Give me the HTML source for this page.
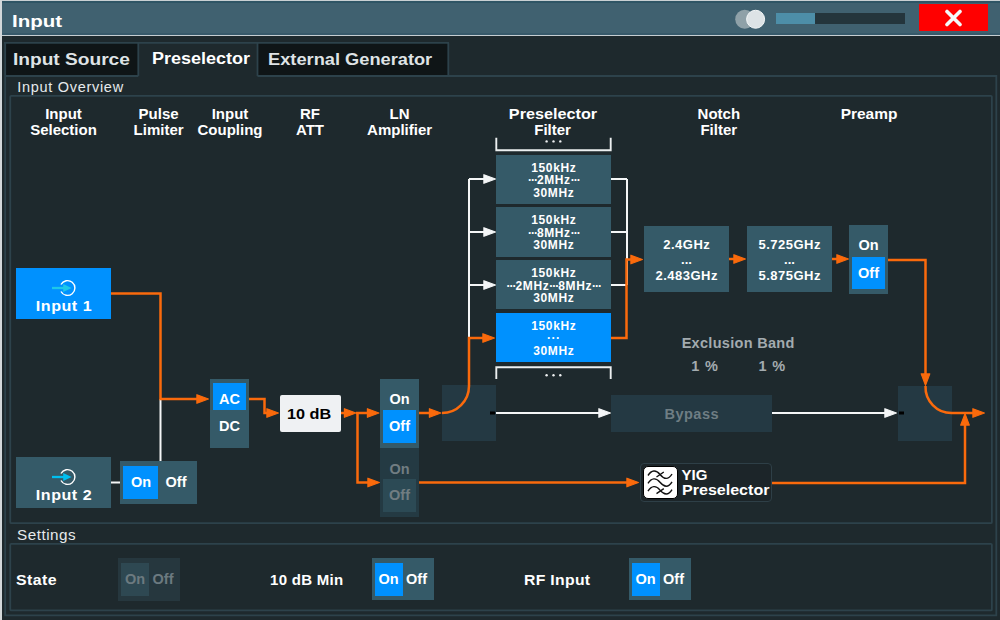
<!DOCTYPE html>
<html><head><meta charset="utf-8"><style>
html,body{margin:0;padding:0;}
body{width:1000px;height:620px;position:relative;overflow:hidden;background:#1e292d;font-family:'Liberation Sans', sans-serif;}
</style></head><body>
<div style="position:absolute;left:0px;top:0px;width:1000px;height:1px;background:#c9d0d3;"></div>
<div style="position:absolute;left:0px;top:1px;width:1000px;height:34px;background:#406170;"></div>
<div style="position:absolute;left:0px;top:1px;width:1000px;height:2px;background:#2f5565;"></div>
<div style="position:absolute;left:0px;top:33px;width:1000px;height:2px;background:#37596a;"></div>
<div style="position:absolute;left:0px;top:35px;width:1000px;height:1px;background:#c5cdd1;"></div>
<div style="position:absolute;left:12px;top:13.00px;height:0;line-height:0;font:bold 16px 'Liberation Sans', sans-serif;letter-spacing:0px;color:#fff;white-space:nowrap;transform:scaleX(1.28);transform-origin:0 0;">Input</div>
<svg style="position:absolute;left:0;top:0" width="1000" height="620"><circle cx="744.75" cy="19.25" r="9.5" fill="#8fa1a8"/><circle cx="755.6" cy="19.25" r="9" fill="#dde3e6" stroke="#f4f7f8" stroke-width="1"/></svg>
<div style="position:absolute;left:776px;top:13px;width:129px;height:11px;background:#24353c;"></div>
<div style="position:absolute;left:776px;top:13px;width:38.5px;height:11px;background:#4d8ea8;"></div>
<div style="position:absolute;left:919px;top:3.5px;width:69px;height:27.0px;background:#ff0000;"></div>
<svg style="position:absolute;left:944px;top:9px" width="19" height="19"><path d="M3 2.5L16 15.5M16 2.5L3 15.5" stroke="#f4f8f8" stroke-width="3.6" stroke-linecap="round"/></svg>
<div style="position:absolute;left:0px;top:0px;width:2px;height:620px;background:#d3d8da;"></div>
<div style="position:absolute;left:5px;top:43px;width:133px;height:32px;background:#0f1517;"></div>
<div style="position:absolute;left:258px;top:43px;width:190px;height:32px;background:#0f1517;"></div>
<svg style="position:absolute;left:0;top:0" width="1000" height="620" fill="none" stroke="#2d424b" stroke-width="1.8"><path d="M4 42.9 H449 M5.2 43 V76 M138.3 43 V76 M257.5 43 V76 M448.3 43 V76"/><path d="M5.2 76 V615.3 H996.3 V76 H257.5 M5.2 76 H138.3"/><rect x="10.25" y="95.8" width="981.6" height="427.4" rx="1"/><rect x="10.25" y="543.8" width="981.6" height="66.6" rx="1"/></svg>
<div style="position:absolute;left:13px;top:51.00px;height:0;line-height:0;font:bold 16px 'Liberation Sans', sans-serif;letter-spacing:0px;color:#dfe3e5;white-space:nowrap;transform:scaleX(1.195);transform-origin:0 0;">Input Source</div>
<div style="position:absolute;left:152.4px;top:50.00px;height:0;line-height:0;font:bold 16px 'Liberation Sans', sans-serif;letter-spacing:0px;color:#fff;white-space:nowrap;transform:scaleX(1.124);transform-origin:0 0;">Preselector</div>
<div style="position:absolute;left:268px;top:51.00px;height:0;line-height:0;font:bold 16px 'Liberation Sans', sans-serif;letter-spacing:0px;color:#dfe3e5;white-space:nowrap;transform:scaleX(1.14);transform-origin:0 0;">External Generator</div>
<div style="position:absolute;left:17.3px;top:79.00px;height:0;line-height:0;font:normal 14.5px 'Liberation Sans', sans-serif;letter-spacing:0.7px;color:#e6eaec;white-space:nowrap;">Input Overview</div>
<div style="position:absolute;left:16.5px;top:527.00px;height:0;line-height:0;font:normal 14.5px 'Liberation Sans', sans-serif;letter-spacing:0.5px;color:#e6eaec;white-space:nowrap;transform:scaleX(1.05);transform-origin:0 0;">Settings</div>
<div style="position:absolute;left:-136.50px;top:105.00px;width:400px;height:0;line-height:0;text-align:center;font:bold 15px 'Liberation Sans', sans-serif;letter-spacing:0px;color:#fff;white-space:nowrap;">Input</div>
<div style="position:absolute;left:-136.50px;top:121.00px;width:400px;height:0;line-height:0;text-align:center;font:bold 15px 'Liberation Sans', sans-serif;letter-spacing:0px;color:#fff;white-space:nowrap;">Selection</div>
<div style="position:absolute;left:-41.40px;top:105.00px;width:400px;height:0;line-height:0;text-align:center;font:bold 15px 'Liberation Sans', sans-serif;letter-spacing:0px;color:#fff;white-space:nowrap;">Pulse</div>
<div style="position:absolute;left:-41.40px;top:121.00px;width:400px;height:0;line-height:0;text-align:center;font:bold 15px 'Liberation Sans', sans-serif;letter-spacing:0px;color:#fff;white-space:nowrap;">Limiter</div>
<div style="position:absolute;left:30.00px;top:105.00px;width:400px;height:0;line-height:0;text-align:center;font:bold 15px 'Liberation Sans', sans-serif;letter-spacing:0px;color:#fff;white-space:nowrap;">Input</div>
<div style="position:absolute;left:30.00px;top:121.00px;width:400px;height:0;line-height:0;text-align:center;font:bold 15px 'Liberation Sans', sans-serif;letter-spacing:0px;color:#fff;white-space:nowrap;">Coupling</div>
<div style="position:absolute;left:110.00px;top:105.00px;width:400px;height:0;line-height:0;text-align:center;font:bold 15px 'Liberation Sans', sans-serif;letter-spacing:0px;color:#fff;white-space:nowrap;">RF</div>
<div style="position:absolute;left:110.00px;top:121.00px;width:400px;height:0;line-height:0;text-align:center;font:bold 15px 'Liberation Sans', sans-serif;letter-spacing:0px;color:#fff;white-space:nowrap;">ATT</div>
<div style="position:absolute;left:199.60px;top:105.00px;width:400px;height:0;line-height:0;text-align:center;font:bold 15px 'Liberation Sans', sans-serif;letter-spacing:0px;color:#fff;white-space:nowrap;">LN</div>
<div style="position:absolute;left:199.60px;top:121.00px;width:400px;height:0;line-height:0;text-align:center;font:bold 15px 'Liberation Sans', sans-serif;letter-spacing:0px;color:#fff;white-space:nowrap;">Amplifier</div>
<div style="position:absolute;left:352.60px;top:105.00px;width:400px;height:0;line-height:0;text-align:center;font:bold 15px 'Liberation Sans', sans-serif;letter-spacing:0px;color:#fff;white-space:nowrap;transform:scaleX(1.08);transform-origin:200px 0;">Preselector</div>
<div style="position:absolute;left:352.60px;top:121.00px;width:400px;height:0;line-height:0;text-align:center;font:bold 15px 'Liberation Sans', sans-serif;letter-spacing:0px;color:#fff;white-space:nowrap;">Filter</div>
<div style="position:absolute;left:518.80px;top:105.00px;width:400px;height:0;line-height:0;text-align:center;font:bold 15px 'Liberation Sans', sans-serif;letter-spacing:0px;color:#fff;white-space:nowrap;">Notch</div>
<div style="position:absolute;left:518.80px;top:121.00px;width:400px;height:0;line-height:0;text-align:center;font:bold 15px 'Liberation Sans', sans-serif;letter-spacing:0px;color:#fff;white-space:nowrap;">Filter</div>
<div style="position:absolute;left:668.80px;top:105.00px;width:400px;height:0;line-height:0;text-align:center;font:bold 15px 'Liberation Sans', sans-serif;letter-spacing:0px;color:#fff;white-space:nowrap;transform:scaleX(1.03);transform-origin:200px 0;">Preamp</div>
<div style="position:absolute;left:16px;top:268px;width:95px;height:51px;background:#0091fe;"></div>
<div style="position:absolute;left:-136.25px;top:297.00px;width:400px;height:0;line-height:0;text-align:center;font:bold 15px 'Liberation Sans', sans-serif;letter-spacing:0.5px;color:#fff;white-space:nowrap;transform:scaleX(1.07);transform-origin:200px 0;">Input 1</div>
<div style="position:absolute;left:16px;top:457px;width:95px;height:51px;background:#355a68;"></div>
<div style="position:absolute;left:-136.25px;top:486.00px;width:400px;height:0;line-height:0;text-align:center;font:bold 15px 'Liberation Sans', sans-serif;letter-spacing:0.5px;color:#fff;white-space:nowrap;transform:scaleX(1.07);transform-origin:200px 0;">Input 2</div>
<div style="position:absolute;left:120px;top:461px;width:77px;height:43px;background:#355a68;"></div>
<div style="position:absolute;left:123px;top:466px;width:35px;height:33px;background:#0091fe;"></div>
<div style="position:absolute;left:-59.00px;top:474.00px;width:400px;height:0;line-height:0;text-align:center;font:bold 14.5px 'Liberation Sans', sans-serif;letter-spacing:0px;color:#fff;white-space:nowrap;">On</div>
<div style="position:absolute;left:-24.00px;top:474.00px;width:400px;height:0;line-height:0;text-align:center;font:bold 14.5px 'Liberation Sans', sans-serif;letter-spacing:0px;color:#fff;white-space:nowrap;">Off</div>
<div style="position:absolute;left:210px;top:379px;width:39px;height:69px;background:#355a68;"></div>
<div style="position:absolute;left:213px;top:383px;width:33px;height:27px;background:#0091fe;"></div>
<div style="position:absolute;left:29.50px;top:391.00px;width:400px;height:0;line-height:0;text-align:center;font:bold 14.5px 'Liberation Sans', sans-serif;letter-spacing:0px;color:#fff;white-space:nowrap;">AC</div>
<div style="position:absolute;left:29.50px;top:418.00px;width:400px;height:0;line-height:0;text-align:center;font:bold 14.5px 'Liberation Sans', sans-serif;letter-spacing:0px;color:#fff;white-space:nowrap;">DC</div>
<div style="position:absolute;left:280px;top:395px;width:61px;height:37px;background:#eff1f3;border-radius:2px;"></div>
<div style="position:absolute;left:109.30px;top:406.00px;width:400px;height:0;line-height:0;text-align:center;font:bold 14.5px 'Liberation Sans', sans-serif;letter-spacing:0px;color:#000;white-space:nowrap;transform:scaleX(1.12);transform-origin:200px 0;">10 dB</div>
<div style="position:absolute;left:380px;top:379px;width:39px;height:69px;background:#355a68;"></div>
<div style="position:absolute;left:383px;top:410px;width:33px;height:33px;background:#0091fe;"></div>
<div style="position:absolute;left:199.50px;top:391.00px;width:400px;height:0;line-height:0;text-align:center;font:bold 14.5px 'Liberation Sans', sans-serif;letter-spacing:0px;color:#fff;white-space:nowrap;">On</div>
<div style="position:absolute;left:199.50px;top:418.00px;width:400px;height:0;line-height:0;text-align:center;font:bold 14.5px 'Liberation Sans', sans-serif;letter-spacing:0px;color:#fff;white-space:nowrap;">Off</div>
<div style="position:absolute;left:380px;top:448px;width:39px;height:69px;background:#243a43;"></div>
<div style="position:absolute;left:383px;top:479px;width:33px;height:33px;background:#2c4a55;"></div>
<div style="position:absolute;left:199.50px;top:461.00px;width:400px;height:0;line-height:0;text-align:center;font:bold 14.5px 'Liberation Sans', sans-serif;letter-spacing:0px;color:#717d82;white-space:nowrap;">On</div>
<div style="position:absolute;left:199.50px;top:487.00px;width:400px;height:0;line-height:0;text-align:center;font:bold 14.5px 'Liberation Sans', sans-serif;letter-spacing:0px;color:#717d82;white-space:nowrap;">Off</div>
<div style="position:absolute;left:442px;top:385px;width:54px;height:56px;background:#243943;"></div>
<div style="position:absolute;left:496px;top:155px;width:115px;height:49px;background:#355a68;"></div>
<div style="position:absolute;left:353.80px;top:161.00px;width:400px;height:0;line-height:0;text-align:center;font:bold 12px 'Liberation Sans', sans-serif;letter-spacing:0.6px;color:#fff;white-space:nowrap;">150kHz</div>
<div style="position:absolute;left:353.80px;top:173.00px;width:400px;height:0;line-height:0;text-align:center;font:bold 12px 'Liberation Sans', sans-serif;letter-spacing:0.6px;color:#fff;white-space:nowrap;"><span style="letter-spacing:-1px">···</span>2MHz<span style="letter-spacing:-1px">···</span></div>
<div style="position:absolute;left:353.80px;top:186.00px;width:400px;height:0;line-height:0;text-align:center;font:bold 12px 'Liberation Sans', sans-serif;letter-spacing:0.6px;color:#fff;white-space:nowrap;">30MHz</div>
<div style="position:absolute;left:496px;top:207px;width:115px;height:50px;background:#355a68;"></div>
<div style="position:absolute;left:353.80px;top:213.00px;width:400px;height:0;line-height:0;text-align:center;font:bold 12px 'Liberation Sans', sans-serif;letter-spacing:0.6px;color:#fff;white-space:nowrap;">150kHz</div>
<div style="position:absolute;left:353.80px;top:226.00px;width:400px;height:0;line-height:0;text-align:center;font:bold 12px 'Liberation Sans', sans-serif;letter-spacing:0.6px;color:#fff;white-space:nowrap;"><span style="letter-spacing:-1px">···</span>8MHz<span style="letter-spacing:-1px">···</span></div>
<div style="position:absolute;left:353.80px;top:238.00px;width:400px;height:0;line-height:0;text-align:center;font:bold 12px 'Liberation Sans', sans-serif;letter-spacing:0.6px;color:#fff;white-space:nowrap;">30MHz</div>
<div style="position:absolute;left:496px;top:260px;width:115px;height:49px;background:#355a68;"></div>
<div style="position:absolute;left:353.80px;top:266.00px;width:400px;height:0;line-height:0;text-align:center;font:bold 12px 'Liberation Sans', sans-serif;letter-spacing:0.6px;color:#fff;white-space:nowrap;">150kHz</div>
<div style="position:absolute;left:353.80px;top:279.00px;width:400px;height:0;line-height:0;text-align:center;font:bold 12px 'Liberation Sans', sans-serif;letter-spacing:0.6px;color:#fff;white-space:nowrap;"><span style="letter-spacing:-1px">···</span>2MHz<span style="letter-spacing:-1px">···</span>8MHz<span style="letter-spacing:-1px">···</span></div>
<div style="position:absolute;left:353.80px;top:291.00px;width:400px;height:0;line-height:0;text-align:center;font:bold 12px 'Liberation Sans', sans-serif;letter-spacing:0.6px;color:#fff;white-space:nowrap;">30MHz</div>
<div style="position:absolute;left:496px;top:313px;width:115px;height:49px;background:#0091fe;"></div>
<div style="position:absolute;left:353.80px;top:319.00px;width:400px;height:0;line-height:0;text-align:center;font:bold 12px 'Liberation Sans', sans-serif;letter-spacing:0.6px;color:#fff;white-space:nowrap;">150kHz</div>
<div style="position:absolute;left:353.80px;top:331.00px;width:400px;height:0;line-height:0;text-align:center;font:bold 12px 'Liberation Sans', sans-serif;letter-spacing:0.6px;color:#fff;white-space:nowrap;">···</div>
<div style="position:absolute;left:353.80px;top:344.00px;width:400px;height:0;line-height:0;text-align:center;font:bold 12px 'Liberation Sans', sans-serif;letter-spacing:0.6px;color:#fff;white-space:nowrap;">30MHz</div>
<svg style="position:absolute;left:0;top:0" width="1000" height="620"><polyline points="496.3,137.8 496.3,150.3 610.7,150.3 610.7,137.8" fill="none" stroke="#eceff0" stroke-width="1.9"/><polyline points="496.3,379 496.3,367.3 610.7,367.3 610.7,379" fill="none" stroke="#eceff0" stroke-width="1.9"/></svg>
<svg style="position:absolute;left:0;top:0" width="1000" height="620"><circle cx="546.6" cy="141.4" r="1.2" fill="#f0f2f3"/><circle cx="553.5" cy="141.4" r="1.2" fill="#f0f2f3"/><circle cx="560.3" cy="141.4" r="1.2" fill="#f0f2f3"/></svg>
<svg style="position:absolute;left:0;top:0" width="1000" height="620"><circle cx="546.6" cy="375.2" r="1.2" fill="#f0f2f3"/><circle cx="553.5" cy="375.2" r="1.2" fill="#f0f2f3"/><circle cx="560.3" cy="375.2" r="1.2" fill="#f0f2f3"/></svg>
<div style="position:absolute;left:644px;top:226px;width:85px;height:66px;background:#355a68;"></div>
<div style="position:absolute;left:486.75px;top:237.00px;width:400px;height:0;line-height:0;text-align:center;font:bold 13px 'Liberation Sans', sans-serif;letter-spacing:0.5px;color:#fff;white-space:nowrap;">2.4GHz</div>
<div style="position:absolute;left:486.50px;top:252.00px;width:400px;height:0;line-height:0;text-align:center;font:bold 13px 'Liberation Sans', sans-serif;letter-spacing:0px;color:#fff;white-space:nowrap;">...</div>
<div style="position:absolute;left:486.75px;top:268.00px;width:400px;height:0;line-height:0;text-align:center;font:bold 13px 'Liberation Sans', sans-serif;letter-spacing:0.5px;color:#fff;white-space:nowrap;">2.483GHz</div>
<div style="position:absolute;left:747px;top:226px;width:85px;height:66px;background:#355a68;"></div>
<div style="position:absolute;left:589.75px;top:237.00px;width:400px;height:0;line-height:0;text-align:center;font:bold 13px 'Liberation Sans', sans-serif;letter-spacing:0.5px;color:#fff;white-space:nowrap;">5.725GHz</div>
<div style="position:absolute;left:589.50px;top:252.00px;width:400px;height:0;line-height:0;text-align:center;font:bold 13px 'Liberation Sans', sans-serif;letter-spacing:0px;color:#fff;white-space:nowrap;">...</div>
<div style="position:absolute;left:589.75px;top:268.00px;width:400px;height:0;line-height:0;text-align:center;font:bold 13px 'Liberation Sans', sans-serif;letter-spacing:0.5px;color:#fff;white-space:nowrap;">5.875GHz</div>
<div style="position:absolute;left:849px;top:225px;width:39px;height:69px;background:#355a68;"></div>
<div style="position:absolute;left:852px;top:257px;width:33px;height:32px;background:#0091fe;"></div>
<div style="position:absolute;left:668.50px;top:237.00px;width:400px;height:0;line-height:0;text-align:center;font:bold 14.5px 'Liberation Sans', sans-serif;letter-spacing:0px;color:#fff;white-space:nowrap;">On</div>
<div style="position:absolute;left:668.50px;top:265.00px;width:400px;height:0;line-height:0;text-align:center;font:bold 14.5px 'Liberation Sans', sans-serif;letter-spacing:0px;color:#fff;white-space:nowrap;">Off</div>
<div style="position:absolute;left:538.15px;top:335.00px;width:400px;height:0;line-height:0;text-align:center;font:bold 14.5px 'Liberation Sans', sans-serif;letter-spacing:0.3px;color:#a3abaf;white-space:nowrap;">Exclusion Band</div>
<div style="position:absolute;left:505.00px;top:358.00px;width:400px;height:0;line-height:0;text-align:center;font:bold 14.5px 'Liberation Sans', sans-serif;letter-spacing:0.8px;color:#a3abaf;white-space:nowrap;">1 %</div>
<div style="position:absolute;left:572.20px;top:358.00px;width:400px;height:0;line-height:0;text-align:center;font:bold 14.5px 'Liberation Sans', sans-serif;letter-spacing:0.8px;color:#a3abaf;white-space:nowrap;">1 %</div>
<div style="position:absolute;left:611px;top:395px;width:161px;height:37px;background:#243943;"></div>
<div style="position:absolute;left:491.75px;top:406.00px;width:400px;height:0;line-height:0;text-align:center;font:bold 14.5px 'Liberation Sans', sans-serif;letter-spacing:0.5px;color:#6f7e84;white-space:nowrap;">Bypass</div>
<div style="position:absolute;left:898px;top:386px;width:54px;height:55px;background:#243943;"></div>
<div style="position:absolute;left:639.5px;top:463px;width:130px;height:37px;border:1px solid #2e3f47;border-radius:4px;background:#1c2529;"></div>
<div style="position:absolute;left:642.5px;top:465.5px;width:35px;height:33px;border-radius:5px;background:#fff;border:1.5px solid #000;box-sizing:border-box;"></div>
<div style="position:absolute;left:681.5px;top:466.00px;height:0;line-height:0;font:bold 15px 'Liberation Sans', sans-serif;letter-spacing:0px;color:#fff;white-space:nowrap;">YIG</div>
<div style="position:absolute;left:681.5px;top:481.00px;height:0;line-height:0;font:bold 15px 'Liberation Sans', sans-serif;letter-spacing:0px;color:#fff;white-space:nowrap;transform:scaleX(1.07);transform-origin:0 0;">Preselector</div>
<div style="position:absolute;left:15.5px;top:571.00px;height:0;line-height:0;font:bold 15px 'Liberation Sans', sans-serif;letter-spacing:0.4px;color:#fff;white-space:nowrap;transform:scaleX(1.06);transform-origin:0 0;">State</div>
<div style="position:absolute;left:118px;top:558px;width:62px;height:43px;background:#26373e;"></div>
<div style="position:absolute;left:121px;top:563px;width:28px;height:33px;background:#2e4852;"></div>
<div style="position:absolute;left:-65.00px;top:571.00px;width:400px;height:0;line-height:0;text-align:center;font:bold 14.5px 'Liberation Sans', sans-serif;letter-spacing:0px;color:#6c7a80;white-space:nowrap;">On</div>
<div style="position:absolute;left:-37.00px;top:571.00px;width:400px;height:0;line-height:0;text-align:center;font:bold 14.5px 'Liberation Sans', sans-serif;letter-spacing:0px;color:#6c7a80;white-space:nowrap;">Off</div>
<div style="position:absolute;left:270px;top:571.00px;height:0;line-height:0;font:bold 15px 'Liberation Sans', sans-serif;letter-spacing:0.3px;color:#fff;white-space:nowrap;">10 dB Min</div>
<div style="position:absolute;left:371.5px;top:557.5px;width:62.0px;height:42.5px;background:#355a68;"></div>
<div style="position:absolute;left:374.5px;top:562.5px;width:28.0px;height:33.5px;background:#0091fe;"></div>
<div style="position:absolute;left:188.50px;top:571.00px;width:400px;height:0;line-height:0;text-align:center;font:bold 14.5px 'Liberation Sans', sans-serif;letter-spacing:0px;color:#fff;white-space:nowrap;">On</div>
<div style="position:absolute;left:216.50px;top:571.00px;width:400px;height:0;line-height:0;text-align:center;font:bold 14.5px 'Liberation Sans', sans-serif;letter-spacing:0px;color:#fff;white-space:nowrap;">Off</div>
<div style="position:absolute;left:524px;top:571.00px;height:0;line-height:0;font:bold 15px 'Liberation Sans', sans-serif;letter-spacing:0.3px;color:#fff;white-space:nowrap;transform:scaleX(1.05);transform-origin:0 0;">RF Input</div>
<div style="position:absolute;left:628.5px;top:557.5px;width:62.0px;height:42.5px;background:#355a68;"></div>
<div style="position:absolute;left:631.5px;top:562.5px;width:28.0px;height:33.5px;background:#0091fe;"></div>
<div style="position:absolute;left:445.50px;top:571.00px;width:400px;height:0;line-height:0;text-align:center;font:bold 14.5px 'Liberation Sans', sans-serif;letter-spacing:0px;color:#fff;white-space:nowrap;">On</div>
<div style="position:absolute;left:473.50px;top:571.00px;width:400px;height:0;line-height:0;text-align:center;font:bold 14.5px 'Liberation Sans', sans-serif;letter-spacing:0px;color:#fff;white-space:nowrap;">Off</div>
<svg style="position:absolute;left:0;top:0" width="1000" height="620"><polyline points="160.5,399 160.5,461" fill="none" stroke="#f4f6f7" stroke-width="2"/><polyline points="111,482.5 120,482.5" fill="none" stroke="#f4f6f7" stroke-width="2"/><polyline points="469,179 469,338" fill="none" stroke="#f4f6f7" stroke-width="2"/><polyline points="469,179 485,179" fill="none" stroke="#f4f6f7" stroke-width="2"/><polygon points="495.4,179 483.9,174.7 483.9,183.3" fill="#f4f6f7" stroke="#f4f6f7" stroke-width="1.2" stroke-linejoin="round"/><polyline points="469,232 485,232" fill="none" stroke="#f4f6f7" stroke-width="2"/><polygon points="495.4,232 483.9,227.7 483.9,236.3" fill="#f4f6f7" stroke="#f4f6f7" stroke-width="1.2" stroke-linejoin="round"/><polyline points="469,285 485,285" fill="none" stroke="#f4f6f7" stroke-width="2"/><polygon points="495.4,285 483.9,280.7 483.9,289.3" fill="#f4f6f7" stroke="#f4f6f7" stroke-width="1.2" stroke-linejoin="round"/><polyline points="611,179 627,179" fill="none" stroke="#f4f6f7" stroke-width="2"/><polyline points="611,232 627,232" fill="none" stroke="#f4f6f7" stroke-width="2"/><polyline points="611,285 627,285" fill="none" stroke="#f4f6f7" stroke-width="2"/><polyline points="627,179 627,285" fill="none" stroke="#f4f6f7" stroke-width="2"/><polyline points="496,413 600,413" fill="none" stroke="#f4f6f7" stroke-width="2"/><polygon points="610.4,413 598.9,408.7 598.9,417.3" fill="#f4f6f7" stroke="#f4f6f7" stroke-width="1.2" stroke-linejoin="round"/><polyline points="772,413 886,413" fill="none" stroke="#f4f6f7" stroke-width="2"/><polygon points="896.4,413 884.9,408.7 884.9,417.3" fill="#f4f6f7" stroke="#f4f6f7" stroke-width="1.2" stroke-linejoin="round"/><rect x="490" y="411.5" width="5" height="3" fill="#000"/><rect x="899" y="411.5" width="5" height="3" fill="#000"/><polyline points="111,293.5 160.5,293.5 160.5,399 198,399" fill="none" stroke="#fa6a0c" stroke-width="2.5"/><polygon points="208.4,399 196.9,394.7 196.9,403.3" fill="#fa6a0c" stroke="#fa6a0c" stroke-width="1.2" stroke-linejoin="round"/><polyline points="249,399 264.5,399 264.5,413 268,413" fill="none" stroke="#fa6a0c" stroke-width="2.5"/><polygon points="278.4,413 266.9,408.7 266.9,417.3" fill="#fa6a0c" stroke="#fa6a0c" stroke-width="1.2" stroke-linejoin="round"/><polyline points="341,413 346,413" fill="none" stroke="#fa6a0c" stroke-width="2.5"/><polygon points="355.9,413 344.4,408.7 344.4,417.3" fill="#fa6a0c" stroke="#fa6a0c" stroke-width="1.2" stroke-linejoin="round"/><polyline points="356,413 369,413" fill="none" stroke="#fa6a0c" stroke-width="2.5"/><polygon points="378.9,413 367.4,408.7 367.4,417.3" fill="#fa6a0c" stroke="#fa6a0c" stroke-width="1.2" stroke-linejoin="round"/><polyline points="357.5,413 357.5,482.5 369,482.5" fill="none" stroke="#fa6a0c" stroke-width="2.5"/><polygon points="379.4,482.5 367.9,478.2 367.9,486.8" fill="#fa6a0c" stroke="#fa6a0c" stroke-width="1.2" stroke-linejoin="round"/><polyline points="419,413 430,413" fill="none" stroke="#fa6a0c" stroke-width="2.5"/><polygon points="440.9,413 429.4,408.7 429.4,417.3" fill="#fa6a0c" stroke="#fa6a0c" stroke-width="1.2" stroke-linejoin="round"/><path d="M442 413 A27 27 0 0 0 469 386 L469 338 L484 338" fill="none" stroke="#fa6a0c" stroke-width="2.5"/><polygon points="494.4,338 482.9,333.7 482.9,342.3" fill="#fa6a0c" stroke="#fa6a0c" stroke-width="1.2" stroke-linejoin="round"/><polyline points="611,338 626.5,338 626.5,259.5 632,259.5" fill="none" stroke="#fa6a0c" stroke-width="2.5"/><polygon points="642.4,259.5 630.9,255.2 630.9,263.8" fill="#fa6a0c" stroke="#fa6a0c" stroke-width="1.2" stroke-linejoin="round"/><polyline points="729,259 736,259" fill="none" stroke="#fa6a0c" stroke-width="2.5"/><polygon points="745.4,259 733.9,254.7 733.9,263.3" fill="#fa6a0c" stroke="#fa6a0c" stroke-width="1.2" stroke-linejoin="round"/><polyline points="832,259 839,259" fill="none" stroke="#fa6a0c" stroke-width="2.5"/><polygon points="848.4,259 836.9,254.7 836.9,263.3" fill="#fa6a0c" stroke="#fa6a0c" stroke-width="1.2" stroke-linejoin="round"/><polyline points="888,260 925.5,260 925.5,375" fill="none" stroke="#fa6a0c" stroke-width="2.5"/><polygon points="925.5,385.4 921.2,373.9 929.8,373.9" fill="#fa6a0c" stroke="#fa6a0c" stroke-width="1.2" stroke-linejoin="round"/><path d="M925.5 386 A26 26 0 0 0 951.5 413 L974 413" fill="none" stroke="#fa6a0c" stroke-width="2.5"/><polygon points="984.4,413 972.9,408.7 972.9,417.3" fill="#fa6a0c" stroke="#fa6a0c" stroke-width="1.2" stroke-linejoin="round"/><polyline points="419,482.5 628,482.5" fill="none" stroke="#fa6a0c" stroke-width="2.5"/><polygon points="638.4,482.5 626.9,478.2 626.9,486.8" fill="#fa6a0c" stroke="#fa6a0c" stroke-width="1.2" stroke-linejoin="round"/><polyline points="772,483 965,483 965,424" fill="none" stroke="#fa6a0c" stroke-width="2.5"/><polygon points="965,413.6 960.7,425.1 969.3,425.1" fill="#fa6a0c" stroke="#fa6a0c" stroke-width="1.2" stroke-linejoin="round"/><path d="M648 475.5 C651.5 470 656 469.5 660 474.5 S668.5 480 672 474" fill="none" stroke="#111" stroke-width="1.4"/><path d="M648 483.3 C651.5 477.8 656 477.3 660 482.3 S668.5 487.8 672 481.8" fill="none" stroke="#111" stroke-width="1.4"/><path d="M648 491.1 C651.5 485.6 656 485.1 660 490.1 S668.5 495.6 672 489.6" fill="none" stroke="#111" stroke-width="1.4"/><path d="M656.5 477 L663.8 472 M656.5 493.6 L663.8 488.6" stroke="#111" stroke-width="1.4"/><path d="M60.97 284.53 A7.4 7.4 0 1 1 60.97 291.47" fill="none" stroke="#fff" stroke-width="1.4"/><path d="M52 288 L64 288" stroke="#1ec8e8" stroke-width="2.3"/><polygon points="71.6,288 63.2,284 63.2,292" fill="#1ec8e8"/><path d="M60.97 473.53 A7.4 7.4 0 1 1 60.97 480.47" fill="none" stroke="#fff" stroke-width="1.4"/><path d="M52 477 L64 477" stroke="#00bff0" stroke-width="2.3"/><polygon points="71.6,477 63.2,473 63.2,481" fill="#00bff0"/></svg>
</body></html>
